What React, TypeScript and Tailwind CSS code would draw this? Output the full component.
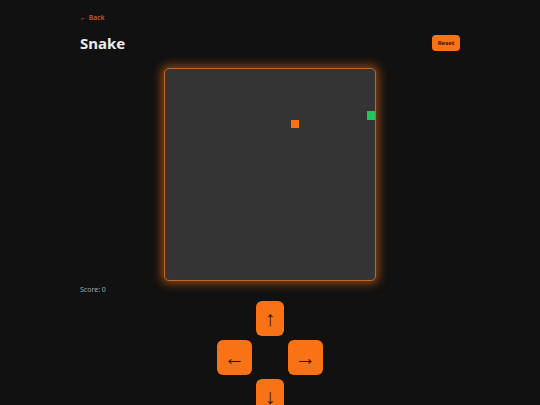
import React from 'react';

type Cell = { x: number; y: number };

// 25x25 board
const snake: Cell[] = [{ x: 24, y: 5 }];
const food: Cell = { x: 15, y: 6 };

const colStart: Record<number, string> = {
  15: 'col-start-[16]',
  24: 'col-start-[25]',
};
const rowStart: Record<number, string> = {
  5: 'row-start-[6]',
  6: 'row-start-[7]',
};

function ArrowButton({ label, wide }: { label: string; wide?: boolean }) {
  return (
    <button
      className={`${wide ? 'w-[35px]' : 'w-[28px]'} h-[35px] flex items-center justify-center rounded-md bg-[#f97316] text-[#2b1608] text-[21px] leading-none font-['Liberation_Sans',sans-serif]`}
    >
      {label}
    </button>
  );
}

export default function App() {
  return (
    <div className="min-h-screen bg-[#111111] text-white font-['Noto_Sans',sans-serif] overflow-hidden">
      <div className="px-20 pt-[13px]">
        {/* Header */}
        <a className="block text-[7px] leading-[10px] text-[#e0762c]">← Back</a>
        <div className="mt-3 flex items-center justify-between h-4">
          <h1 className="text-[15px] font-bold leading-4 text-[#ececec]">Snake</h1>
          <button className="h-4 w-7 rounded-[4px] bg-[#f97316] text-[6px] font-bold text-[#2b1608] leading-none">
            Reset
          </button>
        </div>

        {/* Board */}
        <div className="mt-[17px] flex justify-center">
          <div className="w-[212px] h-[213px] rounded-[5px] border border-[#c8661f] bg-[#343434] shadow-[0_0_10px_3px_rgba(249,115,22,0.5)] overflow-hidden">
            <div className="grid grid-cols-[repeat(25,1fr)] grid-rows-[repeat(25,1fr)] w-full h-full">
              {snake.map((s, i) => (
                <div key={i} className={`${colStart[s.x]} ${rowStart[s.y]} bg-[#22c55e]`} />
              ))}
              <div className={`${colStart[food.x]} ${rowStart[food.y]} bg-[#f97316]`} />
            </div>
          </div>
        </div>

        <p className="mt-[4px] text-[7px] leading-[10px] text-[#a3a3a3]">Score: 0</p>

        {/* Controls */}
        <div className="mt-[6px] flex justify-center">
          <div className="grid grid-cols-[auto_auto_auto] gap-1 justify-items-center">
            <div />
            <ArrowButton label="↑" />
            <div />
            <ArrowButton label="←" wide />
            <div />
            <ArrowButton label="→" wide />
            <div />
            <ArrowButton label="↓" />
            <div />
          </div>
        </div>
      </div>
    </div>
  );
}
